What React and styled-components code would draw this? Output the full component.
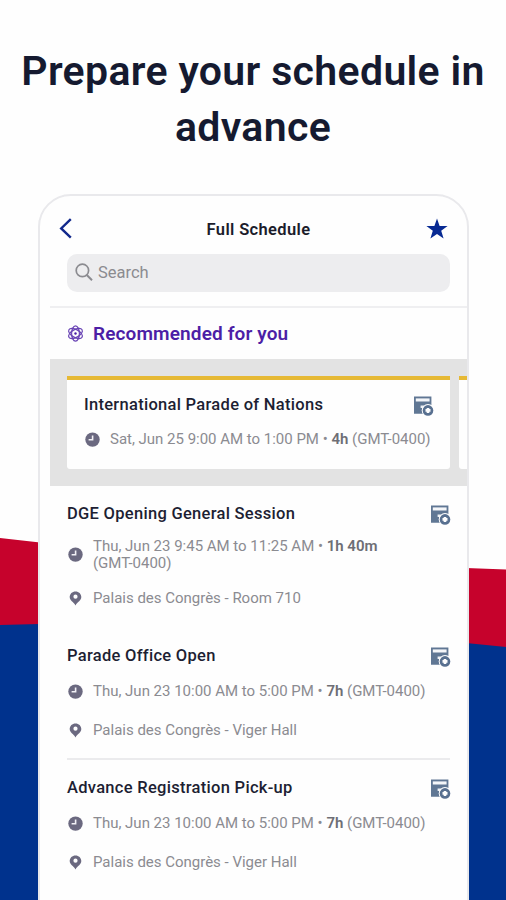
import React from "react";
import styled, { createGlobalStyle } from "styled-components";

const Global = createGlobalStyle`
  * { box-sizing: border-box; }
  body { margin: 0; background: #fefefe; font-family: Roboto, "Liberation Sans", sans-serif; }
`;

const Page = styled.main`
  position: relative;
  width: 506px;
  height: 900px;
  overflow: hidden;
  display: flex;
  flex-direction: column;
`;

const Backdrop = styled.svg`
  position: absolute;
  inset: 0;
  z-index: -1;
`;

const Headline = styled.h1`
  margin: 0;
  flex: none;
  height: 194px;
  padding-top: 43px;
  text-align: center;
  font-size: 41px;
  line-height: 56px;
  font-weight: 600;
  letter-spacing: 0.34px;
  color: #151a30;
  white-space: nowrap;
`;

const Device = styled.section`
  width: 431px;
  height: 740px;
  margin-left: 38px;
  padding-left: 10px;
  flex: none;
  border: 2px solid #e9e9ec;
  border-radius: 33px 33px 0 0;
  background: #fefefe;
  overflow: hidden;
`;

const TopBar = styled.header`
  height: 58px;
  padding: 8px 18px 0 8px;
  display: grid;
  grid-template-columns: 34px 1fr 24px;
  align-items: center;
  justify-items: center;

  > :first-child { justify-self: start; }
`;

const BarTitle = styled.div`
  font-size: 16.5px;
  font-weight: 600;
  letter-spacing: 0.35px;
  color: #1b1c2b;
`;

const SearchBox = styled.div`
  height: 38px;
  margin: 0 17px;
  padding: 0 0 1px 8px;
  display: flex;
  align-items: center;
  gap: 5px;
  border-radius: 10px;
  background: #ededef;
  color: #8b8b90;
  font-size: 16.5px;
`;

const Recommended = styled.div`
  height: 53px;
  margin-top: 14px;
  padding: 0 17px;
  display: flex;
  align-items: center;
  gap: 9px;
  border-top: 2px solid #efeff1;
  font-size: 19px;
  font-weight: 600;
  letter-spacing: 0.13px;
  color: #4c1ea6;
`;

const Carousel = styled.div`
  height: 127px;
  padding: 17px 0 17px 17px;
  display: flex;
  gap: 9px;
  background: #e3e3e3;
  overflow: hidden;
`;

const Card = styled.article`
  flex: none;
  width: 383px;
  padding: 11px 17px 0;
  border-top: 4px solid #e6b935;
  border-radius: 0 0 3px 3px;
  background: #fefefe;
`;

const Session = styled.article`
  height: ${(p) => p.$height}px;
  margin: 0 17px;
  padding-top: 14px;
  border-bottom: ${(p) => (p.$divided ? "2px solid #ebebed" : "none")};
`;

const TitleRow = styled.div`
  height: 28px;
  display: flex;
  justify-content: space-between;
  align-items: center;

  svg { margin: 2px -1px 0 0; }
`;

const Title = styled.h2`
  margin: 0;
  font-size: 16.5px;
  line-height: 20px;
  font-weight: 500;
  letter-spacing: 0.29px;
  color: #1d1f33;
  white-space: nowrap;
`;

const Meta = styled.div`
  display: flex;
  align-items: center;
  gap: 9px;
  height: ${(p) => p.$height}px;
  color: #8b8b91;
  font-size: 15px;
  letter-spacing: -0.01px;
  line-height: 17.5px;
  white-space: nowrap;

  strong { font-weight: 600; color: #6e6e75; }
  svg { flex: none; }
`;

const ClockIcon = () => (
  <svg width="17" height="16" viewBox="0 0 17 16">
    <circle cx="8.5" cy="7.6" r="7.2" fill="#6b6980" />
    <path d="M8.6 3.4V7.7H4.6" fill="none" stroke="#f2f1f6" strokeWidth="1.6" />
  </svg>
);

const PinIcon = () => (
  <svg width="17" height="16" viewBox="0 0 17 16">
    <path
      d="M8.5.4C5.2.4 2.7 2.8 2.7 6c0 3.700 3.700 4.600 5.800 8.400 2.100-3.800 5.800-4.700 5.800-8.400C14.300 2.800 11.800.4 8.500.4Zm0 3.200a2.100 2.100 0 1 1 0 4.200 2.100 2.100 0 0 1 0-4.200Z"
      fill="#6b6980"
      fillRule="evenodd"
    />
  </svg>
);

const CalendarAddIcon = () => (
  <svg width="21" height="22" viewBox="0 0 21 22">
    <path d="M1 1.5h17.4v8.2L11 18.8H1Z" fill="#607794" />
    <path d="M2.8 3.4h13.8v3.1H2.8Z" fill="#f4f6f9" />
    <path d="M7.6 10.6h4v2.2L9.4 15.4V13H7.6Z" fill="#eef1f5" />
    <circle cx="15" cy="15.4" r="6.3" fill="#fefefe" />
    <circle cx="15" cy="15.4" r="5.3" fill="#587090" />
    <path d="M15 12.9v5M12.500 15.4h5" stroke="#fefefe" strokeWidth="2.6" />
  </svg>
);

const AtomIcon = () => (
  <svg width="17" height="17" viewBox="0 0 17 17" fill="none" stroke="#6a45b5" strokeWidth="1.2">
    <ellipse cx="8.5" cy="8.5" rx="7.6" ry="3.9" transform="rotate(30 8.5 8.5)" />
    <ellipse cx="8.5" cy="8.5" rx="7.6" ry="3.9" transform="rotate(90 8.5 8.5)" />
    <ellipse cx="8.5" cy="8.5" rx="7.6" ry="3.9" transform="rotate(150 8.5 8.5)" />
    <circle cx="8.5" cy="8.5" r="1.2" fill="#4c1ea6" stroke="none" />
  </svg>
);

const BackIcon = () => (
  <svg width="14" height="22" viewBox="0 0 14 22">
    <path d="M12.8 1.2 3.2 10.4l9.6 9.2" fill="none" stroke="#12298c" strokeWidth="2.4" />
  </svg>
);

const StarIcon = () => (
  <svg width="22" height="22" viewBox="0 0 22 22">
    <path d="M11 .5 13.6 8H21.6L15.2 12.7 17.6 20.6 11 15.9 4.4 20.6 6.8 12.7.4 8H8.4Z" fill="#082a93" />
  </svg>
);

const SearchIcon = () => (
  <svg width="18" height="19" viewBox="0 0 18 19" fill="none" stroke="#8b8b90" strokeWidth="1.7">
    <circle cx="7.4" cy="7.4" r="6.2" />
    <path d="M11.8 12 17 17.2" strokeWidth="2" />
  </svg>
);

const sessions = [
  { title: "DGE Opening General Session", time: "Thu, Jun 23 9:45 AM to 11:25 AM", length: "1h 40m", wrap: true, place: "Palais des Congrès - Room 710", height: 142 },
  { title: "Parade Office Open", time: "Thu, Jun 23 10:00 AM to 5:00 PM", length: "7h", place: "Palais des Congrès - Viger Hall", height: 132, divided: true },
  { title: "Advance Registration Pick-up", time: "Thu, Jun 23 10:00 AM to 5:00 PM", length: "7h", place: "Palais des Congrès - Viger Hall", height: 140 },
];

export default function App() {
  return (
    <>
      <Global />
      <Page>
        <Backdrop width="506" height="900" viewBox="0 0 506 900">
          <path d="M0 538 40 542.5 466 568 506 569.5V900H0Z" fill="#c6022c" />
          <path d="M0 625 40 624 466 643 506 647V900H0Z" fill="#00328d" />
        </Backdrop>
        <Headline>
          Prepare your schedule in
          <br />
          advance
        </Headline>
        <Device>
          <TopBar>
            <BackIcon />
            <BarTitle>Full Schedule</BarTitle>
            <StarIcon />
          </TopBar>
          <SearchBox>
            <SearchIcon />
            <span>Search</span>
          </SearchBox>
          <Recommended>
            <AtomIcon />
            <span>Recommended for you</span>
          </Recommended>
          <Carousel>
            <Card>
              <TitleRow>
                <Title>International Parade of Nations</Title>
                <CalendarAddIcon />
              </TitleRow>
              <Meta $height={42}>
                <ClockIcon />
                <span>
                  Sat, Jun 25 9:00 AM to 1:00 PM • <strong>4h</strong> (GMT-0400)
                </span>
              </Meta>
            </Card>
            <Card />
          </Carousel>
          {sessions.map((s) => (
            <Session key={s.title} $height={s.height} $divided={s.divided}>
              <TitleRow>
                <Title>{s.title}</Title>
                <CalendarAddIcon />
              </TitleRow>
              <Meta $height={s.wrap ? 54 : 44}>
                <ClockIcon />
                <span>
                  {s.time} • <strong>{s.length}</strong>
                  {s.wrap ? <br /> : " "}
                  (GMT-0400)
                </span>
              </Meta>
              <Meta $height={33}>
                <PinIcon />
                <span>{s.place}</span>
              </Meta>
            </Session>
          ))}
        </Device>
      </Page>
    </>
  );
}
